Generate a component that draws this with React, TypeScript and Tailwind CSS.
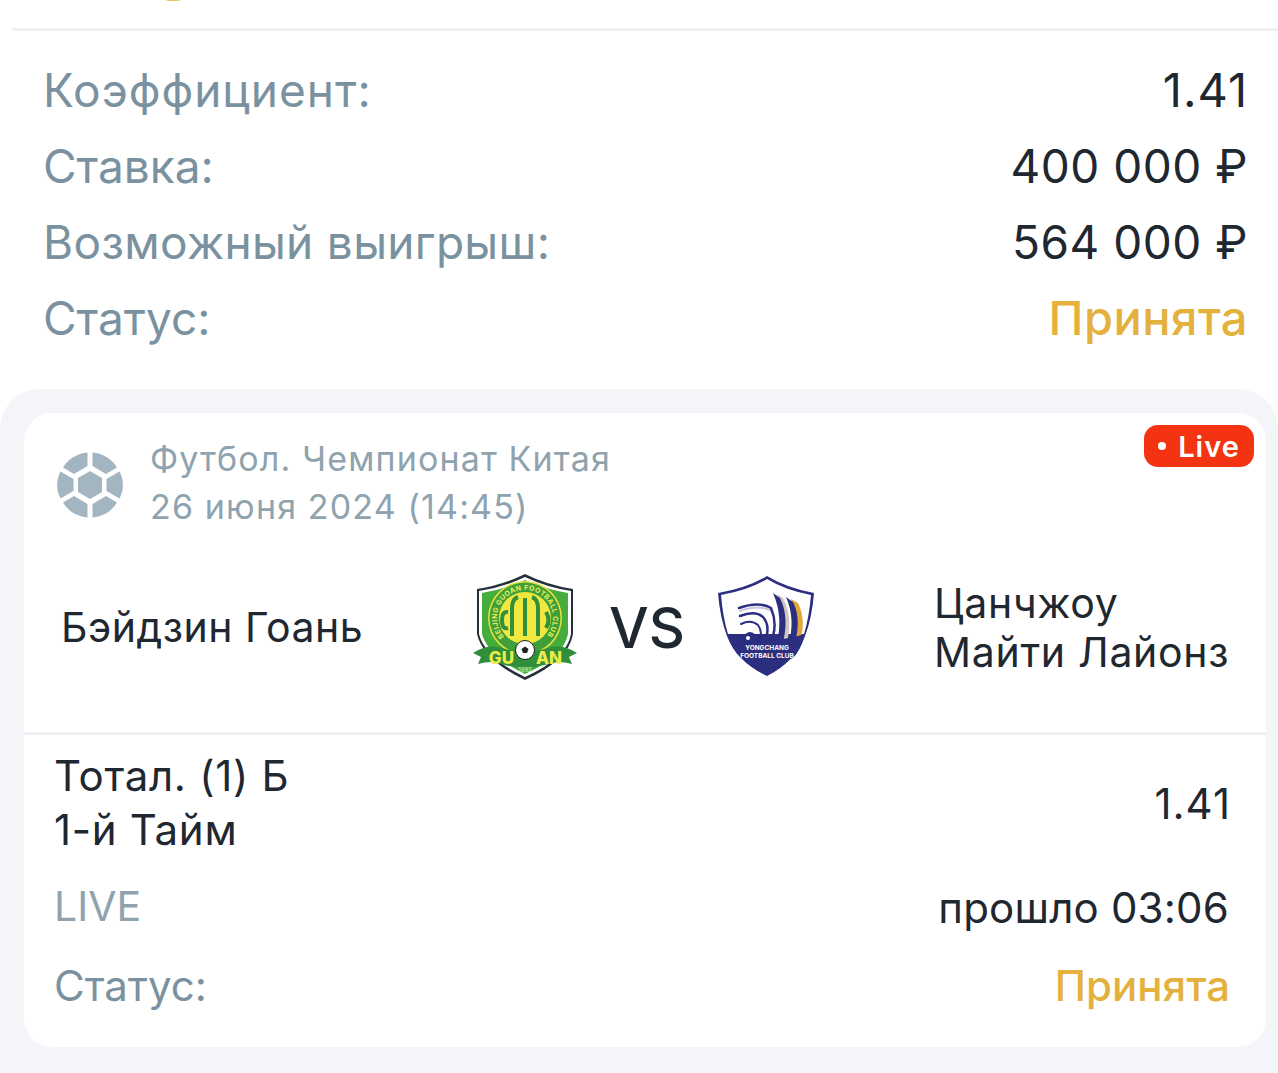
const font = { fontFamily: "Inter, 'Noto Sans', sans-serif" };

const labelClass = "text-[46px] text-[#7a929f]";
const valueClass = "text-[#1f2730]";

const BallIcon = () => (
  <svg width="68" height="68" viewBox="0 0 68 68" className="mt-1 shrink-0">
    <g fill="#a3b5c1">
      <polygon points="34,20 46,27 46,41 34,48 22,41 22,27" />
      <path d="M31.500 1.500V15L18 23 7 16.500C12 8 21 2.500 31.500 1.500Z" />
      <path d="M36.500 1.500V15L50 23 61 16.500C56 8 47 2.500 36.500 1.500Z" />
      <path d="M4.500 20.500L17.500 28V40L4.500 47.500C0 39 0 29 4.500 20.500Z" />
      <path d="M63.500 20.500L50.500 28V40L63.500 47.500C68 39 68 29 63.500 20.500Z" />
      <path d="M31.500 66.500V53L18 45 7 51.500C12 60 21 65.500 31.500 66.500Z" />
      <path d="M36.500 66.500V53L50 45 61 51.500C56 60 47 65.500 36.500 66.500Z" />
    </g>
  </svg>
);

const GuoanLogo = () => (
  <svg width="106" height="108" viewBox="0 0 106 108" className="shrink-0">
    <path d="M4 15 Q30 11 52 0 Q74 11 100 15 V60 Q96 86 52 106 Q10 86 4 60Z" fill="#24303a" />
    <path d="M6 17 Q31 13 52 3 Q73 13 98 17 V60 Q94 84 52 103 Q12 84 6 60Z" fill="#fff" />
    <path d="M9 19 Q33 15 52 6 Q71 15 95 19 V60 Q91 82 52 100 Q15 82 9 60Z" fill="#45ad3c" />
    <circle cx="52" cy="44" r="37" fill="#e6e23c" />
    <circle cx="52" cy="44" r="35.500" fill="#3f9f3a" />
    <circle cx="52" cy="44" r="26" fill="#f0e83e" />
    <path id="guoan-arc" d="M31 62.500 A28 28 0 1 1 73 62.500" fill="none" />
    <text fontSize="7" fontWeight="700" fill="#ecec55" fontFamily="Inter, sans-serif">
      <textPath href="#guoan-arc" textLength="126">BEIJING GUOAN FOOTBALL CLUB</textPath>
    </text>
    <g fill="none" stroke="#2f8f3a" strokeWidth="4">
      <path d="M35 38 Q29 37 29 46 Q29 56 35 54" />
      <path d="M45 23 Q39 25 39 34 V62" />
      <path d="M52 24 V62" />
      <path d="M59 23 Q65 25 65 34 V62" />
      <path d="M73 38 Q78 46 73 54" />
    </g>
    <path d="M0 79 Q14 70 26 73 Q52 82 78 73 Q90 70 104 79 L96 83 L99 90 Q84 86 76 90 Q52 97 28 90 Q20 86 5 90 L8 83Z" fill="#2f8f3a" />
    <text x="41" y="90" textAnchor="end" fontSize="17" fontWeight="800" fill="#ecec4a" fontFamily="Inter, sans-serif">GU</text>
    <text x="63" y="90" fontSize="17" fontWeight="800" fill="#ecec4a" fontFamily="Inter, sans-serif">AN</text>
    <circle cx="52" cy="76" r="9.500" fill="#fff" stroke="#222" strokeWidth="1" />
    <polygon points="52,72.500 55.500,75 54,79 50,79 48.500,75" fill="#222" />
    <text x="52" y="98" textAnchor="middle" fontSize="6" fill="#d8eec0" fontFamily="Inter, sans-serif">1992</text>
  </svg>
);

const YongchangLogo = () => (
  <svg width="100" height="104" viewBox="0 0 100 104" className="-mt-1 shrink-0">
    <path d="M1 19 Q30 14 50 2 Q70 14 97 19 Q95 44 88 62 Q78 88 50 102 Q20 88 10 62 Q3 44 1 19Z" fill="#2c2f80" />
    <path d="M4 21 Q32 16 50 5 Q68 16 94 21 Q92 44 87 60 L11 60 Q6 44 4 21Z" fill="#fff" />
    <path d="M60 20 L66 24 Q77 44 69 72 L63 72 Q71 44 60 20Z" fill="#cfc9bd" />
    <path d="M56 19 L63 24 Q73 44 65 72 L59 72 Q67 44 56 19Z" fill="#2c2f80" />
    <path d="M74 25 L81 29 Q90 47 82 72 L76 72 Q84 47 74 25Z" fill="#e0a83a" />
    <path d="M69 23 L76 28 Q85 46 77 72 L71 72 Q79 46 69 23Z" fill="#2c2f80" />
    <g fill="none" strokeLinecap="round">
      <path d="M23 37 Q42 30 55 37" stroke="#c8c6d8" strokeWidth="2" />
      <path d="M22 34 Q42 27 54 34 Q60 48 56 62" stroke="#2c2f80" strokeWidth="2.500" />
      <path d="M23 42 Q38 36 46 43 Q52 50 50 60" stroke="#2c2f80" strokeWidth="2.500" />
      <path d="M24 50 Q34 45 41 51 Q44 55 44 60" stroke="#2c2f80" strokeWidth="2" />
    </g>
    <circle cx="33" cy="64" r="6" fill="#2c2f80" />
    <path d="M10 60 Q50 72 88 60 Q84 76 76 84 Q50 96 24 84 Q14 74 10 60Z" fill="#2c2f80" />
    <circle cx="31" cy="64" r="2" fill="#fff" />
    <text x="50" y="76" textAnchor="middle" fontSize="6.500" fontWeight="700" fill="#fff" fontFamily="Inter, sans-serif">YONGCHANG</text>
    <text x="50" y="84" textAnchor="middle" fontSize="6.500" fontWeight="700" fill="#fff" fontFamily="Inter, sans-serif">FOOTBALL CLUB</text>
  </svg>
);

export default function App() {
  return (
    <div className="h-[1073px] w-[1278px] overflow-hidden bg-white" style={font}>
      <div className="flex h-[28px] pl-[158px]">
        <div className="-mt-[23px] h-[24px] w-[30px] rounded-full bg-[#e3c65a]" />
      </div>
      <div className="ml-3 h-[3px] bg-[#eef0f1]" />
      <div className="pl-[43px] pr-[30px] pt-[21px]">
        <div className="flex h-[76px] items-center justify-between">
          <span className={`${labelClass} tracking-[1px]`}>Коэффициент:</span>
          <span className={`${valueClass} text-[47px] tracking-[1px]`}>1.41</span>
        </div>
        <div className="flex h-[76px] items-center justify-between">
          <span className={labelClass}>Ставка:</span>
          <span className={`${valueClass} text-[46px] tracking-[0.5px]`}>400 000 ₽</span>
        </div>
        <div className="flex h-[76px] items-center justify-between">
          <span className={`${labelClass} tracking-[0.3px]`}>Возможный выигрыш:</span>
          <span className={`${valueClass} text-[46px] tracking-[0.5px]`}>564 000 ₽</span>
        </div>
        <div className="flex h-[76px] items-center justify-between">
          <span className={labelClass}>Статус:</span>
          <span className="text-[47px] font-medium tracking-[0.5px] text-[#e3b13c]">Принята</span>
        </div>
      </div>
      <div className="mt-[33px] h-[684px] rounded-tl-[40px] rounded-tr-[40px] bg-[#f3f5f9] pl-6 pr-3 pt-6">
        <div className="relative h-[634px] rounded-[28px] bg-white">
          <span className="absolute right-3 top-3 flex h-[42px] w-[110px] items-center justify-center gap-[12px] rounded-[14px] bg-[#f33312] text-[29px] font-semibold leading-none tracking-[1px] text-white">
            <span className="h-[8px] w-[8px] rounded-full bg-white" />
            Live
          </span>

          <div className="flex items-center gap-[26px] pl-[32px] pt-[22px]">
            <BallIcon />
            <div className="text-[34px] leading-[48px] tracking-[1.15px] text-[#8fa3af]">
              <div>Футбол. Чемпионат Китая</div>
              <div>26 июня 2024 (14:45)</div>
            </div>
          </div>

          <div className="mt-[26px] flex h-[178px] items-center border-b-[3px] border-[#eef0f2] pb-[33px]">
            <div className="w-[449px] pl-[37px] text-[41px] tracking-[0.5px] text-[#1f2730]">Бэйдзин Гоань</div>
            <GuoanLogo />
            <div className="ml-[30px] w-[108px] text-[56px] font-medium text-[#1f2730]">VS</div>
            <YongchangLogo />
            <div className="ml-[117px] text-[41px] leading-[49px] tracking-[0.7px] text-[#1f2730]">
              Цанчжоу
              <br />
              Майти Лайонз
            </div>
          </div>

          <div className="pl-[30px] pr-[37px] text-[#1f2730]">
            <div className="flex items-center justify-between pt-[14px]">
              <div className="text-[42px] leading-[54px] tracking-[0.7px]">
                Тотал. (1) Б
                <br />
                1-й Тайм
              </div>
              <span className="mr-[-2px] text-[42px] tracking-[1px]">1.41</span>
            </div>
            <div className="mt-[11px] flex h-[78px] items-center justify-between text-[42px]">
              <span className="text-[41px] text-[#8fa3af]">LIVE</span>
              <span className="tracking-[0.2px]">прошло 03:06</span>
            </div>
            <div className="flex h-[78px] items-center justify-between text-[42px]">
              <span className="text-[#7a929f]">Статус:</span>
              <span className="mr-[-1px] font-medium text-[#e3b13c]">Принята</span>
            </div>
          </div>
        </div>
      </div>
    </div>
  );
}
